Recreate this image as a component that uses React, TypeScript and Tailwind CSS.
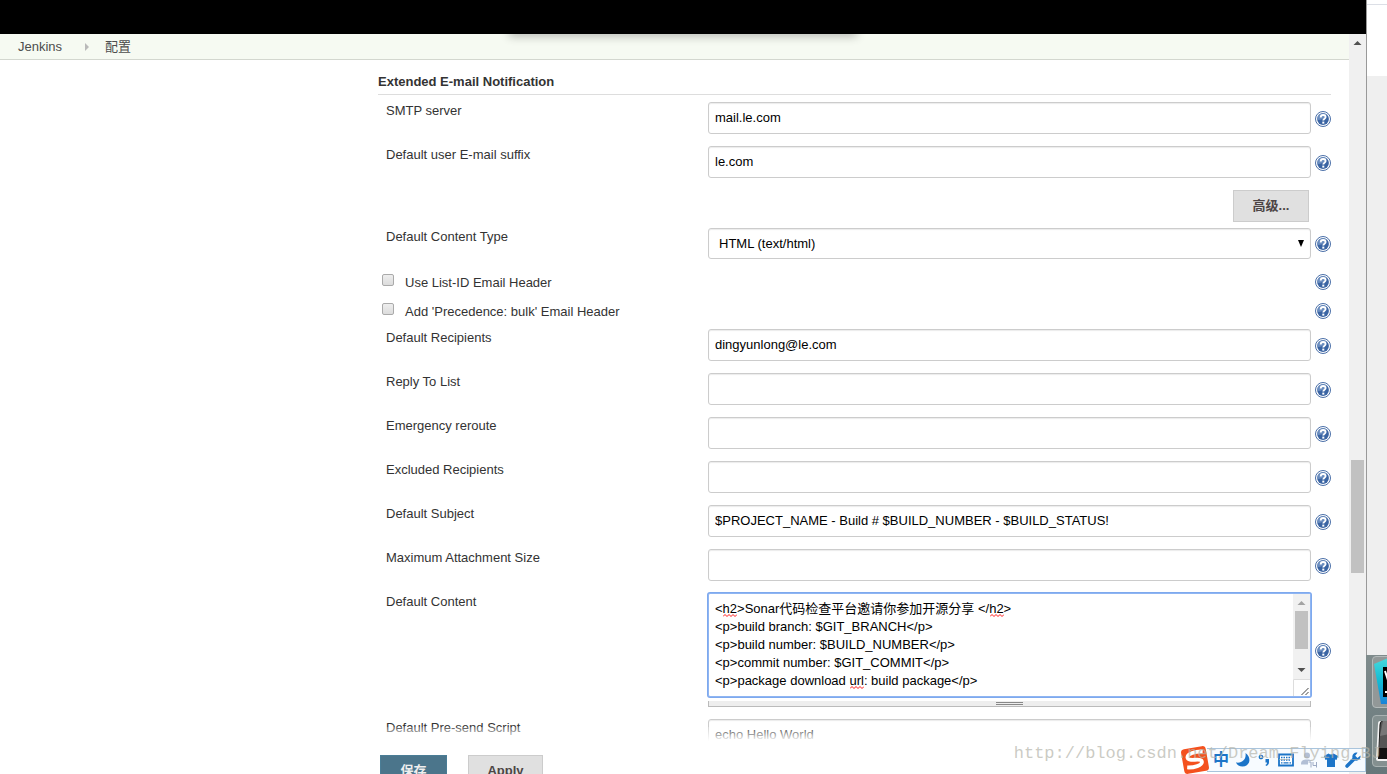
import { useId } from "react"
import type { ReactNode } from "react"

const labelClass = "pt-px pl-2 leading-4 text-[#333]"
const boxClass =
  "block w-full rounded-[3px] border border-[#ccc] bg-white text-black shadow-[inset_0_1px_1px_rgba(0,0,0,0.08)] outline-none"

const topFields = [
  { label: "SMTP server", value: "mail.le.com" },
  { label: "Default user E-mail suffix", value: "le.com" },
]

const headerOptions = ["Use List-ID Email Header", "Add 'Precedence: bulk' Email Header"]

const messageFields = [
  { label: "Default Recipients", value: "dingyunlong@le.com" },
  { label: "Reply To List", value: "" },
  { label: "Emergency reroute", value: "" },
  { label: "Excluded Recipients", value: "" },
  { label: "Default Subject", value: "$PROJECT_NAME - Build # $BUILD_NUMBER - $BUILD_STATUS!" },
  { label: "Maximum Attachment Size", value: "" },
]

const defaultContent = [
  "<h2>Sonar代码检查平台邀请你参加开源分享 </h2>",
  "<p>build branch: $GIT_BRANCH</p>",
  "<p>build number: $BUILD_NUMBER</p>",
  "<p>commit number: $GIT_COMMIT</p>",
  "<p>package download url: build package</p>",
].join("\n")

function HelpButton({ topic }: { topic: string }) {
  return (
    <button type="button" aria-label={`Help for ${topic}`} className="block h-4 w-4">
      <svg viewBox="0 0 16 16" className="h-4 w-4">
        <circle cx="8" cy="8" r="7.5" fill="#fff" stroke="#4a6fa8" />
        <circle cx="8" cy="8" r="5.9" fill="#3a64a3" />
        <path d="M2.3 9a5.700 5.700 0 0 1 9-5.500Q9 9 2.300 9z" fill="#7f9ecb" opacity="0.7" />
        <path
          d="M5.700 6.400C5.700 4.800 6.700 4 8.100 4s2.500.8 2.500 2.100c0 1.700-2.300 1.600-2.300 3.400"
          fill="none"
          stroke="#fff"
          strokeWidth="1.900"
        />
        <rect x="7.300" y="10.600" width="2" height="2" fill="#fff" />
      </svg>
    </button>
  )
}

function Row({ label, htmlFor, children }: { label: string; htmlFor: string; children: ReactNode }) {
  return (
    <div className="grid grid-cols-[330px_1fr_20px]">
      <label htmlFor={htmlFor} className={labelClass}>
        {label}
      </label>
      {children}
      <div className="flex items-center justify-end pt-px">
        <HelpButton topic={label} />
      </div>
    </div>
  )
}

function TextField({ label, value }: { label: string; value: string }) {
  const id = useId()
  return (
    <Row label={label} htmlFor={id}>
      <input id={id} type="text" defaultValue={value} className={`${boxClass} h-8 px-1.5 pb-0.5`} />
    </Row>
  )
}

function Squiggle({ className }: { className: string }) {
  return (
    <svg viewBox="0 0 14 3" className={`pointer-events-none absolute h-[3px] w-3.5 ${className}`}>
      <path d="M0 2.500l2-2 2 2 2-2 2 2 2-2 2 2 2-2" fill="none" stroke="#f00" strokeWidth="0.900" />
    </svg>
  )
}

function ContentEditor() {
  const id = useId()
  return (
    <Row label="Default Content" htmlFor={id}>
      <div>
        <div className="relative flex h-[104px] rounded-[2px] border border-[#8fb5f2] bg-white ring-1 ring-[#7ea9ee]">
          <textarea
            id={id}
            defaultValue={defaultContent}
            spellCheck={false}
            className="block min-w-0 flex-1 resize-none overflow-hidden px-1.5 py-1.5 leading-[18px] text-black outline-none"
          />
          <Squiggle className="top-5 left-3.5" />
          <Squiggle className="top-5 left-[281px]" />
          <Squiggle className="top-[92px] left-[141px]" />
          <div className="flex w-[17px] flex-col bg-[#f1f1f1]">
            <svg viewBox="0 0 17 17" className="h-[17px] w-[17px]">
              <path d="M4.500 11L8.500 7l4 4z" fill="#a3a3a3" />
            </svg>
            <div className="mx-0.5 h-[38px] bg-[#c1c1c1]" />
            <svg viewBox="0 0 17 17" className="mt-auto h-[17px] w-[17px]">
              <path d="M4.500 6L8.500 10l4-4z" fill="#505050" />
            </svg>
            <svg viewBox="0 0 17 17" className="h-[17px] w-[17px] bg-white">
              <path d="M.5 17V.5H17" fill="none" stroke="#ddd" />
              <path d="M8.500 16l7-7M12.500 16l3-3" fill="none" stroke="#444" />
            </svg>
          </div>
        </div>
        {/* Drag handle */}
        <div className="mt-1 flex h-1.5 flex-col items-center gap-px border-x border-b border-[#bbb] bg-[#eee] pt-px">
          <div className="h-px w-[27px] bg-[#888]" />
          <div className="h-px w-[27px] bg-[#888]" />
        </div>
      </div>
    </Row>
  )
}

function InputMethodBar() {
  return (
    <div className="absolute right-0 bottom-0.5 flex h-6 items-center">
      <svg viewBox="0 0 28 28" className="z-10 -mr-0.5 h-7 w-7">
        <g transform="rotate(-10 14 14)">
          <rect x="1.500" y="1.500" width="25" height="25" rx="3.500" fill="#f4511e" />
          <path
            d="M23 7C16 5.500 7 6.500 7 10.500c0 4.500 13.500 2 13.500 6.200 0 4-9 4.800-15.500 3.300"
            fill="none"
            stroke="#fff"
            strokeWidth="3.800"
          />
        </g>
      </svg>
      <div className="flex h-6 items-center gap-[7px] border border-l-0 border-[#a9c4dc] bg-[#f7fbff] pr-1 pl-1.5 text-[#1b74c8]">
        <span className="text-base leading-4 font-bold">中</span>
        <svg viewBox="0 0 14 14" className="h-3.5 w-3.5" fill="currentColor">
          <path d="M9.500 0C16 4.500 14 13.500 6.500 13.500 3.500 13.500 1 12 0 9.500 6.500 10.500 10.500 6 9.500 0z" />
        </svg>
        <svg viewBox="0 0 14 14" className="h-3.5 w-3.5" fill="currentColor">
          <circle cx="4" cy="4" r="1.700" fill="none" stroke="currentColor" strokeWidth="1.300" />
          <path d="M8.500 6h3.500v3c0 2-1 3.500-3 4l-.5-1.200c1-.4 1.500-1 1.500-2.300H8.500z" />
        </svg>
        <svg viewBox="0 0 16 14" className="h-3.5 w-4">
          <path d="M1 1.500h14v11H1z" fill="#fff" stroke="currentColor" strokeWidth="1.800" />
          <path d="M3 4.500h10M3 7h10" stroke="currentColor" strokeWidth="1.300" strokeDasharray="1.500 1" />
          <path d="M3 9.800h1.500M5.500 9.800h5M11.500 9.800H13" stroke="currentColor" strokeWidth="1.300" />
        </svg>
        <svg viewBox="0 0 16 16" className="h-4 w-4" fill="#b2bfd5">
          <circle cx="6" cy="3.500" r="3" />
          <path d="M0 12.500c0-4 2-5 6-5 3 0 4.500.5 5 1.500H7v3.500z" />
          <path d="M7.500 10H10v5.500M12 10v3.500h3.500M15.500 10v5.500" fill="none" stroke="#9caac4" />
        </svg>
        <svg viewBox="0 0 14 14" className="h-3.5 w-3.5" fill="currentColor">
          <path d="M4.500.5q2.500 2 5 0L14 3l-1.500 4-1.500-.5V14H3V6.500L1.500 7 0 3z" />
        </svg>
        <svg viewBox="0 0 16 16" className="h-4 w-4" fill="currentColor">
          <path d="M15.500 3.500l-3 2.500-2.300-2.300 2.300-3C9.500 0 6.500 2.500 7.500 6L.8 12.800a1.700 1.700 0 0 0 2.500 2.500L10 8.500c3.500 1 6-2 5.500-5z" />
        </svg>
      </div>
    </div>
  )
}

function DesktopEdge() {
  return (
    <div className="flex w-[21px] shrink-0 flex-col overflow-hidden">
      <div className="h-[76px] border-l border-[#999] bg-white pt-1">
        <div className="h-px bg-[#dcdfe6]" />
      </div>
      <div className="flex-1 border-l border-[#999] bg-[#efefef]" />
      <div className="flex h-[119px] flex-col gap-[7px] bg-linear-to-b from-[#7f8b8c] to-[#66777a] pt-px pl-1.5">
        <div className="h-[52px] w-[60px] rounded-[4px] border border-[#b3baba] bg-[#929898] pt-px pl-px">
          <svg viewBox="0 0 44 46" className="h-[46px] w-11">
            <defs>
              <linearGradient id="dock-tile" x1="0" y1="0" x2="0" y2="1">
                <stop offset="0" stopColor="#48d8dc" />
                <stop offset="0.500" stopColor="#12bcd4" />
                <stop offset="1" stopColor="#1b82d8" />
              </linearGradient>
            </defs>
            <path d="M0 6L14 0h30v46H7z" fill="url(#dock-tile)" />
            <path d="M9 9h35v30H9z" fill="#000" />
            <path d="M11 13l2 6 2-6M11 34h6" fill="none" stroke="#fff" strokeWidth="2" />
          </svg>
        </div>
        <div className="h-[52px] w-[60px] rounded-[4px] border border-[#a9b2b2] bg-[#849090] pt-1 pl-0.5">
          <svg viewBox="0 0 44 44" className="h-11 w-11">
            <path d="M5 1h39v40H3q-2 0-2-2L3 4q0-3 2-3z" fill="#f2f2f2" />
            <path d="M7 1h37v38H3L4.500 5q.5-4 2.500-4z" fill="#111" />
            <path d="M8 1h36v27H4L5.500 5Q6 1 8 1z" fill="#555" />
            <path d="M8 1h36v6L5 16z" fill="#777" />
          </svg>
        </div>
      </div>
    </div>
  )
}

export default function App() {
  const typeId = useId()
  const scriptId = useId()

  return (
    <div className="relative flex h-screen overflow-hidden bg-white font-['Liberation_Sans','Noto_Sans_CJK_SC',sans-serif] text-[13px] text-[#333]">
      <div className="relative flex min-w-0 flex-1 flex-col">
        <header className="h-[34px] shrink-0 bg-black" />

        <div className="flex min-h-0 flex-1">
          <div className="flex min-w-0 flex-1 flex-col">
            {/* Breadcrumbs */}
            <nav className="relative flex h-[26px] shrink-0 items-center overflow-hidden border-b border-[#d3d7cf] bg-[#f6faf2] pl-[18px]">
              <a href="#jenkins" className="text-[#4d4d4d]">
                Jenkins
              </a>
              <svg viewBox="0 0 4 8" className="mr-4 ml-[23px] h-2 w-1">
                <path d="M0 0l4 4-4 4z" fill="#bababa" />
              </svg>
              <a href="#configure" className="text-[#4d4d4d]">
                配置
              </a>
              <div className="absolute -top-2 left-[509px] h-2 w-[348px] shadow-[0_2px_10px_rgba(0,0,0,0.3)]" />
            </nav>

            <main className="relative min-h-0 flex-1 overflow-hidden pt-[13px] pr-[18px] pl-[378px]">
              <h2 className="mb-[7px] border-b border-[#ddd] pb-[3px] leading-[18px] font-bold">
                Extended E-mail Notification
              </h2>

              <div className="flex flex-col gap-3">
                {topFields.map((field) => (
                  <TextField key={field.label} label={field.label} value={field.value} />
                ))}
              </div>

              <div className="mt-3 mb-1.5 flex justify-end pr-[22px]">
                <button type="button" className="h-8 w-[76px] border border-[#ccc] bg-[#e0e0e0] font-bold text-[#4d4545]">
                  高级...
                </button>
              </div>

              <Row label="Default Content Type" htmlFor={typeId}>
                <div className="relative">
                  <select id={typeId} className={`${boxClass} h-[31px] appearance-none px-2.5`}>
                    <option>HTML (text/html)</option>
                  </select>
                  <svg viewBox="0 0 6 7" className="pointer-events-none absolute top-3 right-[7px] h-[7px] w-1.5">
                    <path d="M0 0h6L3 7z" fill="#000" />
                  </svg>
                </div>
              </Row>

              <div className="mt-2 mb-1">
                {headerOptions.map((option) => (
                  <div key={option} className="flex h-[29px] items-center justify-between pl-1">
                    <label className="flex items-center gap-[11px]">
                      <input
                        type="checkbox"
                        className="mb-1 h-3 w-3 appearance-none rounded-[2px] border border-[#aaa] bg-linear-to-b from-[#eee] to-[#dcdcdc]"
                      />
                      <span className="pt-0.5">{option}</span>
                    </label>
                    <HelpButton topic={option} />
                  </div>
                ))}
              </div>

              <div className="flex flex-col gap-3">
                {messageFields.map((field) => (
                  <TextField key={field.label} label={field.label} value={field.value} />
                ))}
                <ContentEditor />
                <Row label="Default Pre-send Script" htmlFor={scriptId}>
                  <textarea
                    id={scriptId}
                    defaultValue="echo Hello World"
                    className={`${boxClass} h-[104px] resize-none px-1.5 py-1.5 leading-[18px]`}
                  />
                </Row>
              </div>

              <div className="pointer-events-none absolute inset-x-0 bottom-0 h-3.5 bg-linear-to-b from-white/20 to-white" />
            </main>

            {/* Sticky save bar */}
            <div className="flex h-[33px] shrink-0 items-start gap-[21px] overflow-hidden bg-white pt-3.5 pl-[380px]">
              <button type="submit" className="h-8 w-[67px] shrink-0 border border-[#4a7d96] bg-[#4b758b] font-bold text-[#eee]">
                保存
              </button>
              <button type="button" className="h-8 w-[75px] shrink-0 border border-[#ccc] bg-[#e0e0e0] font-bold text-[#4d4545]">
                Apply
              </button>
            </div>
          </div>

          {/* Page scrollbar */}
          <div className="flex w-[17px] shrink-0 flex-col bg-[#f0f0f0]">
            <svg viewBox="0 0 17 17" className="h-[17px] w-[17px]">
              <path d="M4.500 11L8.500 7l4 4z" fill="#505050" />
            </svg>
            <div className="mx-0.5 mt-[409px] h-[113px] bg-[#c1c1c1]" />
          </div>
        </div>

        <InputMethodBar />
      </div>

      <DesktopEdge />

      <div className="pointer-events-none absolute right-1.5 bottom-2 z-20 font-['Liberation_Mono',monospace] text-[17px] leading-6 whitespace-nowrap text-[#b4b4aa]/70">
        http://blog.csdn.net/Dream_Flying_BJ
      </div>
    </div>
  )
}
